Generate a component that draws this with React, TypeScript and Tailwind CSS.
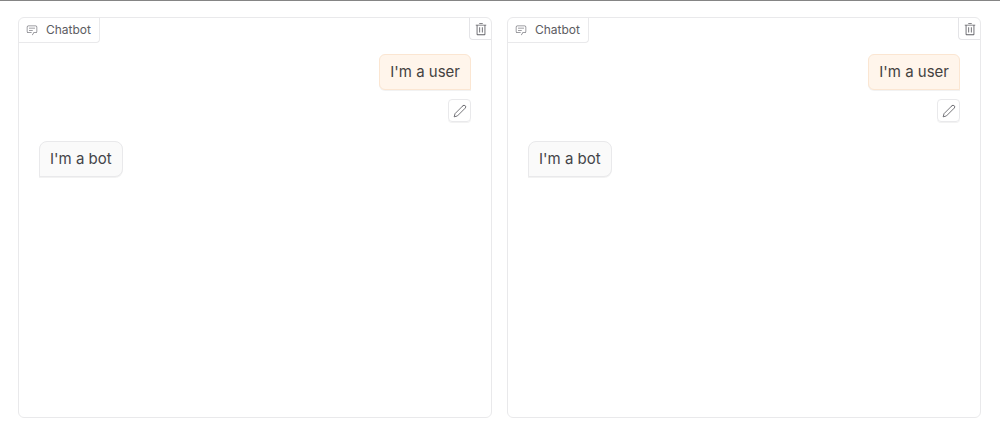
import React, { useState } from "react";

const ChatIcon = () => (
  <svg
    className="w-3 h-3 text-[#808086]"
    viewBox="0 0 32 32"
    fill="currentColor"
    aria-hidden="true"
  >
    <path d="M17.74 30 16 29l4-7h6a2 2 0 0 0 2-2V8a2 2 0 0 0-2-2H6a2 2 0 0 0-2 2v12a2 2 0 0 0 2 2h9v2H6a4 4 0 0 1-4-4V8a4 4 0 0 1 4-4h20a4 4 0 0 1 4 4v12a4 4 0 0 1-4 4h-4.84Z" />
    <path d="M8 10h16v2H8zm0 6h10v2H8z" />
  </svg>
);

const TrashIcon = () => (
  <svg className="w-3.5 h-3.5" viewBox="0 0 32 32" fill="currentColor" aria-hidden="true">
    <path d="M12 12h2v12h-2zm6 0h2v12h-2z" />
    <path d="M4 6v2h2v20a2 2 0 0 0 2 2h16a2 2 0 0 0 2-2V8h2V6zm4 22V8h16v20zm4-26h8v2h-8z" />
  </svg>
);

const EditIcon = () => (
  <svg
    className="w-3.5 h-3.5"
    viewBox="0 0 24 24"
    fill="none"
    stroke="currentColor"
    strokeWidth="1.5"
    strokeLinecap="round"
    strokeLinejoin="round"
    aria-hidden="true"
  >
    <path d="M17 3a2.828 2.828 0 1 1 4 4L7.5 20.5 2 22l1.5-5.5L17 3z" />
  </svg>
);

type Message = { role: "user" | "bot"; text: string };

const initialMessages: Message[] = [
  { role: "user", text: "I'm a user" },
  { role: "bot", text: "I'm a bot" },
];

const Chatbot = () => {
  const [messages, setMessages] = useState(initialMessages);

  const handleEdit = (index: number) => {
    const text = window.prompt("Edit message", messages[index].text);
    if (text) {
      setMessages(messages.map((m, i) => (i === index ? { ...m, text } : m)));
    }
  };

  return (
    <section className="flex-1 min-h-[401px] border border-[#e9e9eb] rounded-md">
      <header className="flex justify-between items-start">
        <h2 className="flex items-center gap-2 h-[25px] pl-[7px] pr-2 border-r border-b border-[#e9e9eb] rounded-br-sm text-xs text-[#5c5c62]">
          <ChatIcon />
          Chatbot
        </h2>
        <button
          type="button"
          aria-label="Clear"
          onClick={() => setMessages([])}
          className="flex items-center justify-center w-[22px] h-[22px] border-l border-b border-[#e4e4e7] rounded-bl-sm text-[#606066]"
        >
          <TrashIcon />
        </button>
      </header>
      <div className="flex flex-col gap-[19px] px-5 pt-[11px]">
        {messages.map((message, index) =>
          message.role === "user" ? (
            <div key={index} className="flex flex-col items-end gap-[9px]">
              <p className="px-2.5 py-1.5 border border-[#fbe6d2] rounded-md rounded-br-none bg-[#fff5eb] text-[15px] leading-[22px] text-[#44423f] shadow-2xs">
                {message.text}
              </p>
              <button
                type="button"
                aria-label="Edit"
                onClick={() => handleEdit(index)}
                className="flex items-center justify-center w-[23px] h-[23px] border border-[#e9e9eb] rounded-sm text-[#606066] shadow-2xs"
              >
                <EditIcon />
              </button>
            </div>
          ) : (
            <p
              key={index}
              className="self-start px-2.5 py-1.5 border border-[#e9e9eb] rounded-lg rounded-bl-none bg-[#fafafa] text-[15px] leading-[22px] text-[#444448] shadow-2xs"
            >
              {message.text}
            </p>
          )
        )}
      </div>
    </section>
  );
};

const App = () => {
  return (
    <main className="flex gap-[15px] pl-[18px] pr-[19px] pt-4 border-t border-[#858585] bg-white font-['Inter',sans-serif]">
      <Chatbot />
      <Chatbot />
    </main>
  );
};

export default App;
